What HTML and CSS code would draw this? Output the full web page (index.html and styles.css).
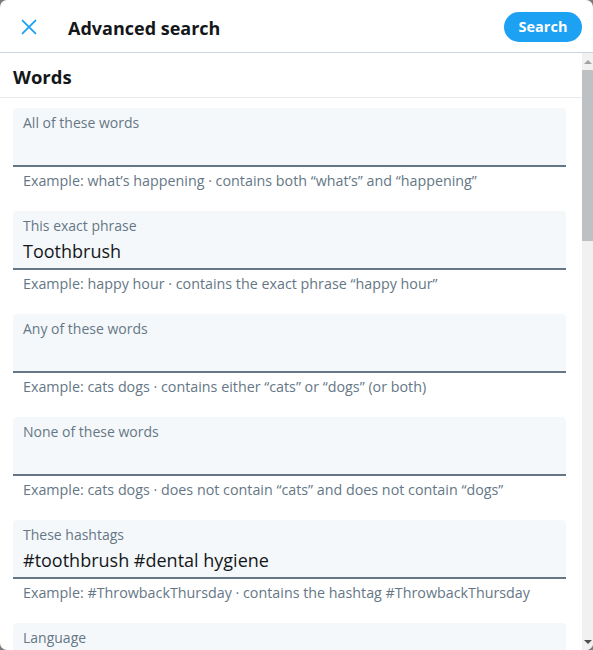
FILE: index.html
```html
<!DOCTYPE html>
<html>
<head>
<meta charset="utf-8">
<link rel="stylesheet" href="styles.css">
</head>
<body>
<div class="modal">
  <header class="header">
    <button class="close" aria-label="Close">
      <svg viewBox="0 0 24 24" width="22" height="22"><path d="M5 5 L19 19 M19 5 L5 19" stroke="#1da1f2" stroke-width="2" stroke-linecap="round" fill="none"/></svg>
    </button>
    <h1 class="title">Advanced search</h1>
    <button class="search-btn">Search</button>
  </header>
  <div class="body">
    <div class="content">
      <h2 class="section">Words</h2>
      <div class="fields">
        <div class="group">
          <div class="field"><div class="label">All of these words</div><div class="value"></div></div>
          <div class="help">Example: what’s happening · contains both “what’s” and “happening”</div>
        </div>
        <div class="group">
          <div class="field"><div class="label">This exact phrase</div><div class="value">Toothbrush</div></div>
          <div class="help">Example: happy hour · contains the exact phrase “happy hour”</div>
        </div>
        <div class="group">
          <div class="field"><div class="label">Any of these words</div><div class="value"></div></div>
          <div class="help">Example: cats dogs · contains either “cats” or “dogs” (or both)</div>
        </div>
        <div class="group">
          <div class="field"><div class="label">None of these words</div><div class="value"></div></div>
          <div class="help">Example: cats dogs · does not contain “cats” and does not contain “dogs”</div>
        </div>
        <div class="group">
          <div class="field"><div class="label">These hashtags</div><div class="value">#toothbrush #dental hygiene</div></div>
          <div class="help">Example: #ThrowbackThursday · contains the hashtag #ThrowbackThursday</div>
        </div>
        <div class="group">
          <div class="field"><div class="label">Language</div><div class="value"></div></div>
        </div>
      </div>
    </div>
    <div class="scrollbar">
      <div class="arrow up"></div>
      <div class="thumb"></div>
      <div class="track"></div>
      <div class="arrow down"></div>
    </div>
  </div>
</div>
</body>
</html>
```
FILE: styles.css
```css
* { box-sizing: border-box; }
html, body { margin: 0; padding: 0; }
body {
  background: #7a7a7a;
  font-family: "Open Sans", "Noto Sans", sans-serif;
  color: #14171a;
}
.modal {
  width: 593px;
  height: 650px;
  background: #fff;
  border-radius: 7px;
  overflow: hidden;
  display: flex;
  flex-direction: column;
}
.header {
  height: 53px;
  flex: 0 0 53px;
  border-bottom: 1px solid #ccd6dd;
  display: flex;
  align-items: center;
  padding: 0 11px 0 17px;
}
.close {
  border: 0;
  background: none;
  padding: 0;
  width: 24px;
  height: 24px;
  display: flex;
  align-items: center;
  justify-content: center;
  margin-top: 2px;
}
.title {
  margin: 3px 0 0 27px;
  font-size: 18px;
  font-weight: 700;
  flex: 1;
}
.search-btn {
  border: 0;
  background: #1da1f2;
  color: #fff;
  font-family: inherit;
  font-weight: 700;
  font-size: 14.5px;
  height: 30px;
  width: 78px;
  border-radius: 15px;
  margin-top: 1px;
}
.body {
  flex: 1;
  display: flex;
  min-height: 0;
}
.content {
  flex: 1;
  overflow: hidden;
}
.section {
  margin: 0;
  height: 45px;
  border-bottom: 1px solid #e6ecf0;
  font-size: 18.5px;
  font-weight: 700;
  padding: 11px 13px 0;
}
.fields {
  padding: 10px 16px 0 13px;
}
.field {
  background: #f5f8fa;
  border-radius: 4px 4px 0 0;
  border-bottom: 2px solid #657786;
  height: 59px;
  padding: 5px 10px 0;
}
.label {
  font-size: 14px;
  line-height: 20px;
  color: #657786;
}
.value {
  font-size: 18px;
  line-height: 26px;
  margin-top: 2px;
  color: #14171a;
}
.help {
  font-size: 14.3px;
  line-height: 20px;
  color: #657786;
  padding: 4px 10px 0;
  height: 44px;
}
.scrollbar {
  width: 11px;
  flex: 0 0 11px;
  background: #f1f1f1;
  display: flex;
  flex-direction: column;
}
.arrow {
  height: 17px;
  flex: 0 0 17px;
  position: relative;
}
.arrow.up::after, .arrow.down::after {
  content: "";
  position: absolute;
  left: 2px;
  border-left: 4px solid transparent;
  border-right: 4px solid transparent;
}
.arrow.up::after { top: 7px; border-bottom: 4px solid #a3a3a3; }
.arrow.down::after { bottom: 6px; border-top: 4px solid #505050; }
.thumb {
  height: 171px;
  flex: 0 0 171px;
  background: #bdc1c4;
}
.track { flex: 1; }
```
